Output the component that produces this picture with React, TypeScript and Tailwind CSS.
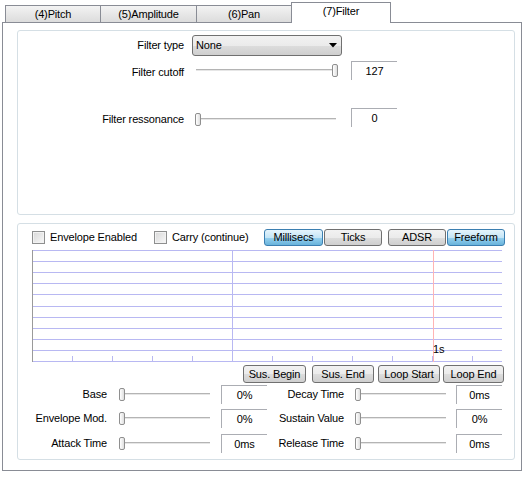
import React from "react";

const grayBtn =
  "border border-[#707070] rounded-[3px] bg-[linear-gradient(to_bottom,#f2f2f2_0%,#ebebeb_50%,#dddddd_51%,#cfcfcf_100%)]";
const blueBtn =
  "border border-[#3c7fb1] rounded-[3px] bg-[linear-gradient(to_bottom,#e5f4fc_0%,#c4e5f6_50%,#98d1ef_51%,#68b3db_100%)]";

function Tab({ label, w, selected, first }: { label: string; w: string; selected?: boolean; first?: boolean }) {
  if (selected) {
    return (
      <div
        className={`${w} -ml-px h-[21px] -mb-px relative z-10 bg-white border border-b-0 border-[#898c95] flex justify-center pt-[2px]`}
      >
        {label}
      </div>
    );
  }
  return (
    <div
      className={`${w} ${first ? "" : "-ml-px"} h-[17px] border border-b-0 border-[#898c95] bg-[linear-gradient(to_bottom,#f3f3f3,#dcdcdc)] flex items-center justify-center`}
    >
      {label}
    </div>
  );
}

function Slider({ w, max }: { w: string; max?: boolean }) {
  return (
    <div className={`${w} h-[13px] relative shrink-0`}>
      <div className="absolute left-[1px] right-[2px] top-[5px] h-[3px] border-t border-[#b4b4b4] bg-[#e6e6e6] border-b border-b-white" />
      <div
        className={`absolute top-0 ${max ? "right-0" : "left-0"} w-[6px] h-[13px] rounded-[2px] border border-[#8f8f8f] bg-[linear-gradient(to_right,#ffffff,#dedede)]`}
      />
    </div>
  );
}

function Box({ text, w = "w-[46px]", ml }: { text: string; w?: string; ml: string }) {
  return (
    <div className={`${w} ${ml} h-[19px] shrink-0 border-t border-l border-[#abadb3] flex items-center justify-center`}>
      {text}
    </div>
  );
}

function Check({ label }: { label: string }) {
  return (
    <div className="flex items-center">
      <div className="w-[13px] h-[13px] border border-[#8e8f8f] bg-[linear-gradient(135deg,#d8d8d8,#f8f8f8)] shadow-[inset_0_0_0_1px_#f2f2f2]" />
      <span className="ml-[5px]">{label}</span>
    </div>
  );
}

function Btn({ label, w, blue, ml = "" }: { label: string; w: string; blue?: boolean; ml?: string }) {
  return (
    <div className={`${w} ${ml} h-full shrink-0 flex items-center justify-center ${blue ? blueBtn : grayBtn}`}>
      {label}
    </div>
  );
}

function Graph() {
  const W = 470;
  const H = 112;
  const lines = [];
  for (let i = 0; i <= 10; i++) {
    const y = Math.round(i * 11.1) + 0.5;
    lines.push(<line key={"h" + i} x1={0} x2={W} y1={Math.min(y, H - 0.5)} y2={Math.min(y, H - 0.5)} stroke="#b8b8f2" strokeWidth={1} />);
  }
  const ticks = [];
  for (let i = 0; i <= 11; i++) {
    const x = i * 40 + 0.5;
    ticks.push(<line key={"t" + i} x1={x} x2={x} y1={106} y2={H} stroke="#b8b8f2" strokeWidth={1} />);
  }
  return (
    <svg width={W} height={H} className="block">
      {lines}
      {ticks}
      <line x1={200.5} x2={200.5} y1={0} y2={H} stroke="#b8b8f2" strokeWidth={1} />
      <line x1={401.5} x2={401.5} y1={0} y2={H} stroke="#ffb4b4" strokeWidth={1} />
      <line x1={0.5} x2={0.5} y1={0} y2={H} stroke="#9a9a9a" strokeWidth={1} />
      <text x={401} y={103} fontSize={11} fontFamily="Liberation Sans, Arial, sans-serif" fill="#000">
        1s
      </text>
    </svg>
  );
}

function ParamRow({ mt, l1, v1, l2, v2 }: { mt: string; l1: string; v1: string; l2: string; v2: string }) {
  return (
    <div className={`flex items-center h-[19px] ${mt}`}>
      <div className="w-[89px] text-right shrink-0">{l1}</div>
      <div className="ml-[12px]">
        <Slider w="w-[93px]" />
      </div>
      <Box text={v1} ml="ml-[9px]" />
      <div className="w-[77px] text-right shrink-0">{l2}</div>
      <div className="ml-[11px]">
        <Slider w="w-[93px]" />
      </div>
      <Box text={v2} ml="ml-[8px]" />
    </div>
  );
}

export default function App() {
  return (
    <div className="w-[526px] h-[478px] bg-white text-black text-[11px] leading-[13px] tracking-[-0.15px] font-['Liberation_Sans',Arial,sans-serif] overflow-hidden">
      <div className="flex items-end h-[22px] pl-[5px]">
        <Tab label="(4)Pitch" w="w-[96px]" first />
        <Tab label="(5)Amplitude" w="w-[97px]" />
        <Tab label="(6)Pan" w="w-[96px]" />
        <Tab label="(7)Filter" w="w-[100px]" selected />
      </div>
      <div className="ml-[2px] w-[520px] h-[449px] border border-[#898c95] bg-white">
        {/* group 1 */}
        <div className="ml-[14px] mt-[7px] w-[498px] h-[185px] border border-[#d5dfe5] rounded-[3px]">
          <div className="mt-[4px] h-[21px] flex items-center">
            <div className="w-[166px] text-right shrink-0">Filter type</div>
            <div className="ml-[8px] w-[150px] h-[21px] flex items-center justify-between pl-[3px] pr-[4px] border border-[#707070] rounded-[3px] bg-[linear-gradient(to_bottom,#f2f2f2_0%,#ebebeb_50%,#dddddd_51%,#cfcfcf_100%)]">
              <span>None</span>
              <svg width="8" height="5" viewBox="0 0 8 5">
                <polygon points="0,0 8,0 4,4.5" fill="#000" />
              </svg>
            </div>
          </div>
          <div className="mt-[5px] h-[19px] flex items-center">
            <div className="w-[166px] text-right shrink-0 pt-[3px]">Filter cutoff</div>
            <div className="ml-[11px]">
              <Slider w="w-[143px]" max />
            </div>
            <Box text="127" ml="ml-[13px]" />
          </div>
          <div className="mt-[28px] h-[19px] flex items-center">
            <div className="w-[166px] text-right shrink-0 pt-[3px]">Filter ressonance</div>
            <div className="ml-[11px] pt-[3px]">
              <Slider w="w-[143px]" />
            </div>
            <Box text="0" ml="ml-[13px]" />
          </div>
        </div>
        {/* group 2 */}
        <div className="ml-[14px] mt-[8px] w-[498px] h-[237px] border border-[#d5dfe5] rounded-[3px]">
          <div className="mt-[5px] h-[17px] flex items-center">
            <div className="ml-[14px] w-[122px] shrink-0">
              <Check label="Envelope Enabled" />
            </div>
            <div className="w-[110px] shrink-0">
              <Check label="Carry (continue)" />
            </div>
            <Btn label="Millisecs" w="w-[59px]" blue />
            <Btn label="Ticks" w="w-[58px]" ml="ml-[1px]" />
            <Btn label="ADSR" w="w-[58px]" ml="ml-[6px]" />
            <Btn label="Freeform" w="w-[58px]" ml="ml-[1px]" blue />
          </div>
          <div className="mt-[4px] ml-[14px]">
            <Graph />
          </div>
          <div className="mt-[3px] h-[18px] flex">
            <Btn label="Sus. Begin" w="w-[63px]" ml="ml-[225px]" />
            <Btn label="Sus. End" w="w-[62px]" ml="ml-[6px]" />
            <Btn label="Loop Start" w="w-[62px]" ml="ml-[4px]" />
            <Btn label="Loop End" w="w-[61px]" ml="ml-[3px]" />
          </div>
          <ParamRow mt="mt-[2px]" l1="Base" v1="0%" l2="Decay Time" v2="0ms" />
          <ParamRow mt="mt-[5px]" l1="Envelope Mod." v1="0%" l2="Sustain Value" v2="0%" />
          <ParamRow mt="mt-[6px]" l1="Attack Time" v1="0ms" l2="Release Time" v2="0ms" />
        </div>
      </div>
    </div>
  );
}
